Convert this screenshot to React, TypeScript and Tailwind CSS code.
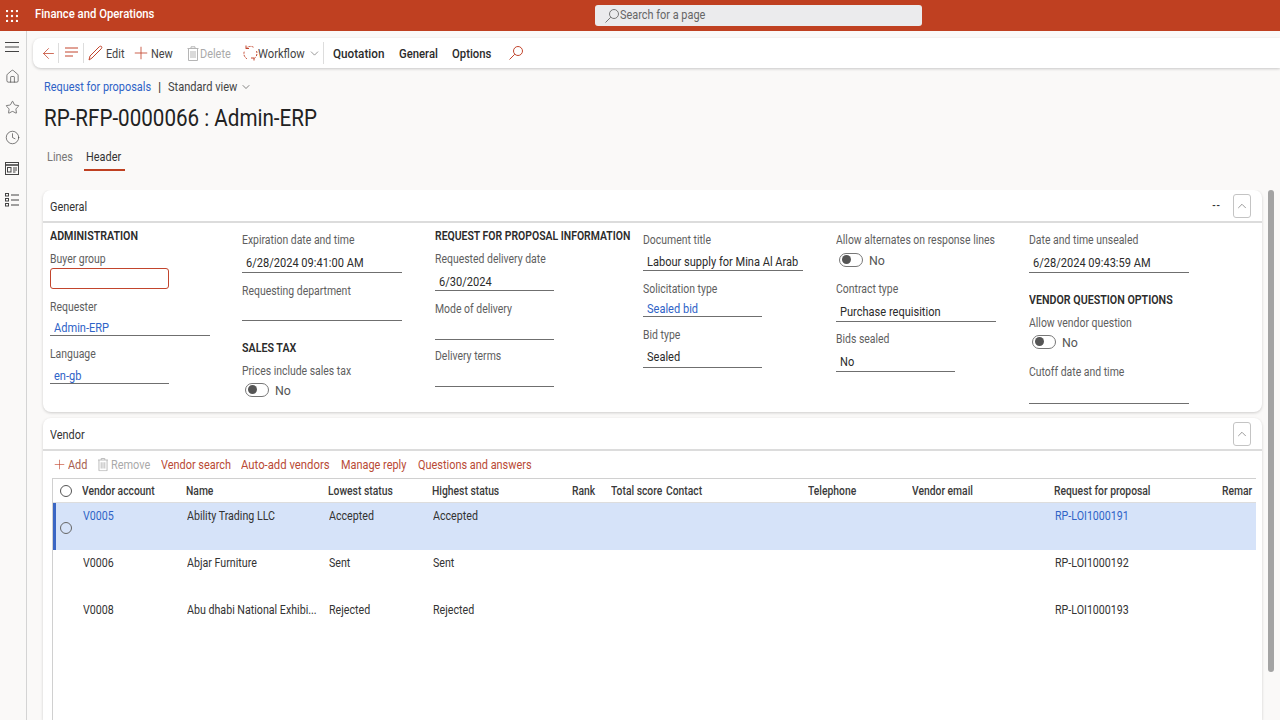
import React from "react";
import { ArrowLeft, ChevronDown, ChevronUp, Home, Star, Clock, Plus } from "lucide-react";

function T({ c, children }: { c: string; children: React.ReactNode }) {
  return <span className={`inline-block origin-left whitespace-nowrap ${c}`}>{children}</span>;
}

function SearchGlyph({ color, size, cls }: { color: string; size: number; cls?: string }) {
  return (
    <svg width={size} height={size} viewBox="0 0 14 14" fill="none" stroke={color} strokeWidth="1" className={`shrink-0 ${cls ?? ""}`}>
      <circle cx="9" cy="5" r="4.5" />
      <path d="M5.800 8.200L.5 13.500" />
    </svg>
  );
}

function Trash({ c = "#b5b5b5" }: { c?: string }) {
  return (
    <svg width="12" height="15" viewBox="0 0 12 15" fill="none" stroke={c} strokeWidth="1" className="block">
      <path d="M0.5 2.5h11M4 2.5V.8h4v1.700M1.500 2.500v12h9v-12" />
      <path d="M4 5v7M6 5v7M8 5v7" />
    </svg>
  );
}

function Grip() {
  return (
    <svg width="12" height="12" viewBox="0 0 12 12" fill="#fff" className="block">
      {[1, 6, 11].map((x) => [1, 6, 11].map((y) => <circle key={`${x}-${y}`} cx={x} cy={y} r="1.2" />))}
    </svg>
  );
}

function Label({ children, mt }: { children: React.ReactNode; mt: string }) {
  return (
    <div className={`h-4 leading-[18px] text-[12px] text-[#5e5e5e] ${mt}`}>
      <T c="scale-x-[0.87]">{children}</T>
    </div>
  );
}

function Value({ children, box, link }: { children?: React.ReactNode; box: string; link?: boolean }) {
  return (
    <div className={`flex items-end pl-1 leading-3 border-b border-[#6f6f6f] text-[13px] ${box} ${link ? "text-[#2f63c7]" : "text-[#2b2b2b]"}`}>
      {children && <T c="scale-x-[0.85]">{children}</T>}
    </div>
  );
}

function Heading({ children, mt, c = "scale-x-[0.89]" }: { children: React.ReactNode; mt: string; c?: string }) {
  return (
    <div className={`h-4 leading-[18px] text-[12px] font-semibold text-[#2b2b2b] ${mt}`}>
      <T c={c}>{children}</T>
    </div>
  );
}

function Toggle({ box }: { box: string }) {
  return (
    <div className={`flex items-center ${box}`}>
      <div className="ml-[3px] mt-[1px] w-[24px] h-[14px] rounded-full border border-[#777] flex items-center pl-[2px]">
        <div className="w-[9px] h-[9px] rounded-full bg-[#555]" />
      </div>
      <span className="ml-[6px] pt-[4px] text-[13px] text-[#555]">
        <T c="scale-x-[0.95]">No</T>
      </span>
    </div>
  );
}

function CollapseBtn() {
  return (
    <div className="w-[18px] h-[24px] border border-[#c4c4c4] rounded-[3px] flex items-center justify-center">
      <ChevronUp size={14} strokeWidth={1} color="#555" />
    </div>
  );
}

const cols = ["w-[29px]", "w-[104px]", "w-[142px]", "w-[104px]", "w-[140px]", "w-[39px]", "w-[55px]", "w-[142px]", "w-[104px]", "w-[142px]", "w-[168px]", "w-[34px]"];
const heads = ["", "Vendor account", "Name", "Lowest status", "Highest status", "Rank", "Total score", "Contact", "Telephone", "Vendor email", "Request for proposal", "Remar"];
const rows = [
  ["V0005", "Ability Trading LLC", "Accepted", "Accepted", "RP-LOI1000191"],
  ["V0006", "Abjar Furniture", "Sent", "Sent", "RP-LOI1000192"],
  ["V0008", "Abu dhabi National Exhibi...", "Rejected", "Rejected", "RP-LOI1000193"],
];

function Row({ r, selected }: { r: string[]; selected: boolean }) {
  const text = selected ? "text-[#2f63c7]" : "text-[#333]";
  return (
    <div className={`flex h-[47px] text-[13px] text-[#333] ${selected ? "bg-[#d6e3f9]" : ""}`}>
      <div className={`${cols[0]} flex items-center ${selected ? "border-l-[3px] border-[#3a66c4]" : ""}`}>
        {selected && <div className="w-[12px] h-[12px] rounded-full border border-[#666] ml-[4px] mt-[2px]" />}
      </div>
      <div className={`${cols[1]} pt-[3px] pl-[1px] ${text}`}><T c="scale-x-[0.82]">{r[0]}</T></div>
      <div className={`${cols[2]} pt-[3px] pl-[1px]`}><T c="scale-x-[0.82]">{r[1]}</T></div>
      <div className={`${cols[3]} pt-[3px] pl-[1px]`}><T c="scale-x-[0.82]">{r[2]}</T></div>
      <div className={`${cols[4]} pt-[3px] pl-[1px]`}><T c="scale-x-[0.82]">{r[3]}</T></div>
      <div className={cols[5]} />
      <div className={cols[6]} />
      <div className={cols[7]} />
      <div className={cols[8]} />
      <div className={cols[9]} />
      <div className={`${cols[10]} pt-[3px] pl-[1px] ${text}`}><T c="scale-x-[0.82]">{r[4]}</T></div>
    </div>
  );
}

export default function App() {
  return (
    <div className="w-[1280px] h-[720px] overflow-hidden bg-[#faf9f8] flex flex-col font-['Roboto','Liberation_Sans',sans-serif]">
      <header className="h-[31px] shrink-0 bg-[#bf4021] flex items-center">
        <div className="ml-[6px] w-[29px]"><Grip /></div>
        <div className="w-[560px] mb-[3px] text-[13px] font-medium text-white"><T c="scale-x-[0.87]">Finance and Operations</T></div>
        <div className="w-[327px] h-[21px] rounded-[3px] bg-[#ebebed] flex items-center pl-[10px] text-[13px] text-[#666]">
          <SearchGlyph color="#777" size={14} />
          <span className="ml-[1px] mb-[1px]"><T c="scale-x-[0.84]">Search for a page</T></span>
        </div>
      </header>
      <div className="flex flex-1 min-h-0">
        <aside className="w-[27px] shrink-0 border-r border-[#d4d4d4] flex flex-col items-center text-[#444]">
          <svg width="14" height="10" viewBox="0 0 14 10" stroke="#444" strokeWidth="1" className="mt-[11px] mr-[3px]">
            <path d="M0 .5h14M0 5h14M0 9.500h14" />
          </svg>
          <Home size={15} strokeWidth={1.1} className="mt-[17px] mr-[2px]" />
          <Star size={15} strokeWidth={1.1} className="mt-[16px] mr-[2px]" />
          <Clock size={15} strokeWidth={1.1} className="mt-[15px] mr-[2px]" />
          <svg width="14" height="13" viewBox="0 0 14 13" fill="none" stroke="#444" strokeWidth="1" className="mt-[17px] mr-[2px]">
            <rect x=".5" y=".5" width="13" height="12" />
            <path d="M.5 3h13" strokeWidth="1.6" />
            <rect x="2.500" y="5.500" width="3.500" height="4.500" />
            <path d="M8 6h4M8 8h4M8 10h2.500" />
          </svg>
          <svg width="14" height="14" viewBox="0 0 14 14" fill="none" stroke="#444" strokeWidth="1" className="mt-[18px] mr-[2px]">
            <rect x=".5" y=".5" width="3" height="2.500" />
            <rect x=".5" y="5.500" width="3" height="2.500" />
            <rect x=".5" y="10.500" width="3" height="2.500" />
            <path d="M6 2h8M6 7h8M6 12h8" />
          </svg>
        </aside>
        <main className="flex-1 min-w-0 flex flex-col">
          <div className="ml-[6px] mt-[7px] h-[30px] shrink-0 bg-white rounded-l-lg shadow-[0_1px_3px_rgba(0,0,0,0.2)] flex items-center text-[13px]">
            <ArrowLeft size={17} strokeWidth={1.1} color="#c2452d" className="ml-[7px] shrink-0" />
            <div className="w-px h-[20px] bg-[#ddd] ml-[1px] shrink-0" />
            <svg width="14" height="10" viewBox="0 0 14 10" stroke="#c2452d" strokeWidth="1" className="ml-[6px] mb-[3px] shrink-0">
              <path d="M0 1h13M0 5h13M0 9h8" />
            </svg>
            <div className="w-px h-[20px] bg-[#ddd] ml-[4px] shrink-0" />
            <svg width="15" height="16" viewBox="0 0 15 16" fill="none" stroke="#c2452d" strokeWidth="1" className="ml-[4px] shrink-0">
              <path d="M1 15l1-4L11 2c1-1 2-1 2.500-.5s.5 1.500-.5 2.500L4 13z" />
            </svg>
            <span className="ml-[3px] pt-[2px] text-[#444] w-[19px] shrink-0"><T c="scale-x-[0.84]">Edit</T></span>
            <Plus size={20} strokeWidth={1} color="#c2452d" className="ml-[6px] shrink-0" />
            <span className="pt-[2px] text-[#444] w-[23px] shrink-0"><T c="scale-x-[0.84]">New</T></span>
            <div className="ml-[13px] shrink-0"><Trash /></div>
            <span className="ml-[1px] pt-[2px] text-[#aaa] w-[31px] shrink-0"><T c="scale-x-[0.84]">Delete</T></span>
            <svg width="15" height="16" viewBox="0 0 15 16" fill="none" strokeWidth="1" className="ml-[12px] shrink-0">
              <path d="M3 3.500A6 6 0 0 1 11 2.500" stroke="#c2452d" strokeDasharray="2 1" />
              <path d="M13.500 6A6 6 0 0 1 11 13.500M4 13.800A6 6 0 0 1 1.500 6" stroke="#c2452d" strokeDasharray="2 1" />
              <path d="M3 .5v3h3M11 15.500v-2.500H8" stroke="#c2452d" />
            </svg>
            <span className="pt-[2px] text-[#444] w-[50px] shrink-0"><T c="scale-x-[0.86]">Workflow</T></span>
            <ChevronDown size={13} strokeWidth={1} color="#444" className="shrink-0" />
            <div className="w-px h-[22px] bg-[#ddd] ml-[2px] shrink-0" />
            <span className="ml-[9px] pt-[2px] font-medium text-[#2b2b2b] w-[52px] shrink-0"><T c="scale-x-[0.9]">Quotation</T></span>
            <span className="ml-[14px] pt-[2px] font-medium text-[#2b2b2b] w-[38px] shrink-0"><T c="scale-x-[0.87]">General</T></span>
            <span className="ml-[15px] pt-[2px] font-medium text-[#2b2b2b] w-[40px] shrink-0"><T c="scale-x-[0.87]">Options</T></span>
            <SearchGlyph color="#c2452d" size={14} cls="ml-[17px] mb-[1px]" />
          </div>

          <div className="ml-[17px] mt-[11px] h-4 leading-4 flex items-center text-[13px] shrink-0">
            <span className="text-[#2f63c7] w-[106px]"><T c="scale-x-[0.84]">Request for proposals</T></span>
            <span className="ml-[8px] w-[3px] text-[#333]">|</span>
            <span className="ml-[7px] text-[#444] w-[70px]"><T c="scale-x-[0.85]">Standard view</T></span>
            <ChevronDown size={12} strokeWidth={1.2} color="#333" className="ml-[2px]" />
          </div>
          <div className="ml-[17px] mt-[7px] h-[32px] leading-[32px] text-[24px] text-[#222] shrink-0">
            <T c="scale-x-[0.858]">RP-RFP-0000066 : Admin-ERP</T>
          </div>
          <div className="ml-[20px] mt-[15px] flex text-[13px] shrink-0">
            <div className="w-[25px] h-[22px] leading-4 text-[#777]"><T c="scale-x-[0.84]">Lines</T></div>
            <div className="ml-[12px] w-[41px] h-[22px] leading-4 pl-[2px] text-[#333] border-b-2 border-[#bf4021]"><T c="scale-x-[0.84]">Header</T></div>
          </div>

          <div className="mt-[19px] flex-1 min-h-0 overflow-hidden flex">
            <div className="ml-[16px] w-[1219px] shrink-0 flex flex-col">
              <section className="h-[222px] shrink-0 bg-white rounded-lg shadow-[0_1px_3px_rgba(0,0,0,0.18)]">
                <div className="h-[33px] border-b-2 border-[#dcdcdc] flex items-center pl-[7px] text-[13px] text-[#333]">
                  <span className="pt-[2px]"><T c="scale-x-[0.84]">General</T></span>
                  <span className="ml-auto mr-[12px] text-[10px] tracking-[1px] font-medium">--</span>
                  <div className="mr-[11px]"><CollapseBtn /></div>
                </div>
                <div className="flex pl-[7px]">
                  <div className="w-[192px] pt-[4px]">
                    <Heading mt="">ADMINISTRATION</Heading>
                    <Label mt="mt-[7px]">Buyer group</Label>
                    <div className="mt-[2px] w-[119px] h-[21px] border border-[#c2452d] rounded-[3px]" />
                    <Label mt="mt-[9px]">Requester</Label>
                    <Value box="w-[160px] h-[22px] pb-[1px]" link>Admin-ERP</Value>
                    <Label mt="mt-[9px]">Language</Label>
                    <Value box="w-[119px] h-[23px] pb-[1px]" link>en-gb</Value>
                  </div>
                  <div className="w-[193px] pt-[4px]">
                    <Label mt="mt-[4px]">Expiration date and time</Label>
                    <Value box="w-[160px] h-[26px] pb-[3px]">6/28/2024 09:41:00 AM</Value>
                    <Label mt="mt-[9px]">Requesting department</Label>
                    <Value box="w-[160px] h-[23px]" />
                    <Heading mt="mt-[18px]">SALES TAX</Heading>
                    <Label mt="mt-[7px]">Prices include sales tax</Label>
                    <Toggle box="h-[22px]" />
                  </div>
                  <div className="w-[208px] pt-[4px]">
                    <Heading mt="" c="scale-x-[0.87]">REQUEST FOR PROPOSAL INFORMATION</Heading>
                    <Label mt="mt-[7px]">Requested delivery date</Label>
                    <Value box="w-[119px] h-[25px] pb-[2px]">6/30/2024</Value>
                    <Label mt="mt-[9px]">Mode of delivery</Label>
                    <Value box="w-[119px] h-[24px]" />
                    <Label mt="mt-[7px]">Delivery terms</Label>
                    <Value box="w-[119px] h-[24px]" />
                  </div>
                  <div className="w-[193px] pt-[4px]">
                    <Label mt="mt-[4px]">Document title</Label>
                    <Value box="w-[160px] h-[24px] pb-[2px]">Labour supply for Mina Al Arab</Value>
                    <Label mt="mt-[9px]">Solicitation type</Label>
                    <Value box="w-[119px] h-[21px] pb-[1px]" link>Sealed bid</Value>
                    <Label mt="mt-[9px]">Bid type</Label>
                    <Value box="w-[119px] h-[26px] pb-[4px]">Sealed</Value>
                  </div>
                  <div className="w-[193px] pt-[4px]">
                    <Label mt="mt-[4px]">Allow alternates on response lines</Label>
                    <Toggle box="h-[24px]" />
                    <Label mt="mt-[9px]">Contract type</Label>
                    <Value box="w-[160px] h-[26px] pb-[3px]">Purchase requisition</Value>
                    <Label mt="mt-[8px]">Bids sealed</Label>
                    <Value box="w-[119px] h-[26px] pb-[3px]">No</Value>
                  </div>
                  <div className="w-[193px] pt-[4px]">
                    <Label mt="mt-[4px]">Date and time unsealed</Label>
                    <Value box="w-[160px] h-[26px] pb-[3px]">6/28/2024 09:43:59 AM</Value>
                    <Heading mt="mt-[18px]">VENDOR QUESTION OPTIONS</Heading>
                    <Label mt="mt-[7px]">Allow vendor question</Label>
                    <Toggle box="h-[22px]" />
                    <Label mt="mt-[11px]">Cutoff date and time</Label>
                    <Value box="w-[160px] h-[25px]" />
                  </div>
                </div>
              </section>

              <section className="mt-[6px] flex-1 bg-white rounded-t-lg shadow-[0_1px_3px_rgba(0,0,0,0.18)] flex flex-col min-h-0">
                <div className="h-[33px] shrink-0 border-b-2 border-[#dcdcdc] flex items-center pl-[7px] text-[13px] text-[#333]">
                  <span className="pt-[2px]"><T c="scale-x-[0.84]">Vendor</T></span>
                  <div className="ml-auto mr-[11px]"><CollapseBtn /></div>
                </div>
                <div className="h-[27px] shrink-0 flex items-center pl-[9px] text-[13px] text-[#b94a35]">
                  <Plus size={15} strokeWidth={1} color="#c2452d" className="shrink-0" />
                  <span className="ml-[1px] w-[20px] shrink-0 text-[#a8604f]"><T c="scale-x-[0.84]">Add</T></span>
                  <div className="ml-[9px] scale-90 shrink-0"><Trash /></div>
                  <span className="ml-[2px] w-[39px] shrink-0 text-[#aaa]"><T c="scale-x-[0.84]">Remove</T></span>
                  <span className="ml-[11px] w-[69px] shrink-0"><T c="scale-x-[0.84]">Vendor search</T></span>
                  <span className="ml-[11px] w-[89px] shrink-0"><T c="scale-x-[0.87]">Auto-add vendors</T></span>
                  <span className="ml-[11px] w-[67px] shrink-0"><T c="scale-x-[0.84]">Manage reply</T></span>
                  <span className="ml-[10px] shrink-0"><T c="scale-x-[0.84]">Questions and answers</T></span>
                </div>
                <div className="ml-[9px] w-[1204px] flex-1 min-h-0 border-l border-t border-[#d0d0d0] overflow-hidden">
                  <div className="flex h-[24px] items-center border-b border-[#ddd] text-[12px] font-medium text-[#3a3a3a]">
                    {heads.map((h, i) => (
                      <div key={i} className={`${cols[i]} shrink-0 flex items-center`}>
                        {i === 0 ? <div className="w-[12px] h-[12px] rounded-full border border-[#555] ml-[7px]" /> : <T c="scale-x-[0.86]">{h}</T>}
                      </div>
                    ))}
                  </div>
                  {rows.map((r, i) => (
                    <Row key={r[0]} r={r} selected={i === 0} />
                  ))}
                </div>
              </section>
            </div>
            <div className="ml-[6px] w-[6px] h-[482px] rounded-full bg-[#a3a3a3] shrink-0" />
          </div>
        </main>
      </div>
    </div>
  );
}
